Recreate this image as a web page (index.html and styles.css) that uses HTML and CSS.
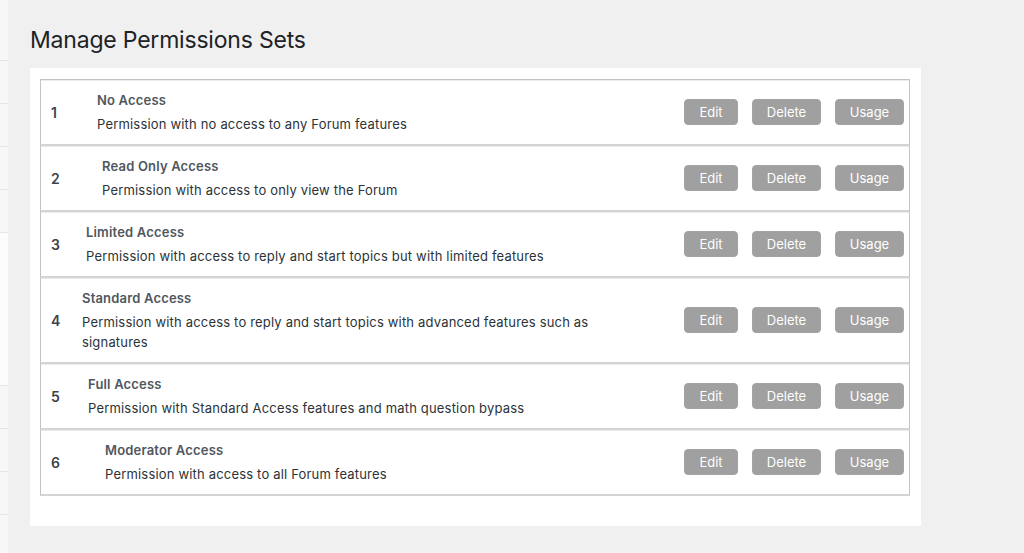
FILE: index.html
```html
<!DOCTYPE html>
<html>
<head>
<meta charset="utf-8">
<link rel="stylesheet" href="styles.css">
</head>
<body>
<div class="layout">
  <aside class="strip">
    <div class="seg s0"></div>
    <div class="seg"></div>
    <div class="seg"></div>
    <div class="seg"></div>
    <div class="seg"></div>
    <div class="seg white"></div>
    <div class="seg"></div>
    <div class="seg"></div>
    <div class="seg"></div>
    <div class="seg"></div>
  </aside>
  <main class="main">
    <h1 class="page-title">Manage Permissions Sets</h1>
    <section class="panel">
      <div class="list">
        <div class="row">
          <div class="num w1">1</div>
          <div class="info">
            <div class="name">No Access</div>
            <div class="desc">Permission with no access to any Forum features</div>
          </div>
          <div class="actions"><span class="btn b-edit">Edit</span><span class="btn b-del">Delete</span><span class="btn b-use">Usage</span></div>
        </div>
        <div class="row">
          <div class="num w2">2</div>
          <div class="info">
            <div class="name">Read Only Access</div>
            <div class="desc">Permission with access to only view the Forum</div>
          </div>
          <div class="actions"><span class="btn b-edit">Edit</span><span class="btn b-del">Delete</span><span class="btn b-use">Usage</span></div>
        </div>
        <div class="row">
          <div class="num w3">3</div>
          <div class="info">
            <div class="name">Limited Access</div>
            <div class="desc">Permission with access to reply and start topics but with limited features</div>
          </div>
          <div class="actions"><span class="btn b-edit">Edit</span><span class="btn b-del">Delete</span><span class="btn b-use">Usage</span></div>
        </div>
        <div class="row">
          <div class="num w4">4</div>
          <div class="info">
            <div class="name">Standard Access</div>
            <div class="desc">Permission with access to reply and start topics with advanced features such as signatures</div>
          </div>
          <div class="actions"><span class="btn b-edit">Edit</span><span class="btn b-del">Delete</span><span class="btn b-use">Usage</span></div>
        </div>
        <div class="row">
          <div class="num w5">5</div>
          <div class="info">
            <div class="name">Full Access</div>
            <div class="desc">Permission with Standard Access features and math question bypass</div>
          </div>
          <div class="actions"><span class="btn b-edit">Edit</span><span class="btn b-del">Delete</span><span class="btn b-use">Usage</span></div>
        </div>
        <div class="row">
          <div class="num w6">6</div>
          <div class="info">
            <div class="name">Moderator Access</div>
            <div class="desc">Permission with access to all Forum features</div>
          </div>
          <div class="actions"><span class="btn b-edit">Edit</span><span class="btn b-del">Delete</span><span class="btn b-use">Usage</span></div>
        </div>
      </div>
    </section>
  </main>
</div>
</body>
</html>
```
FILE: styles.css
```css
html, body {
  margin: 0;
  padding: 0;
}
body {
  background: #f0f0f1;
  font-family: Inter, "Liberation Sans", Arial, sans-serif;
  color: #3c434a;
  font-size: 13px;
}
.layout {
  display: flex;
  min-height: 553px;
}
.strip {
  width: 8px;
  flex: none;
  display: flex;
  flex-direction: column;
}
.seg {
  height: 42px;
  background: #f6f7f7;
  border-bottom: 1px solid #e6e6e6;
}
.seg.s0 {
  height: 60px;
}
.seg.white {
  height: 152px;
  background: #fcfcfc;
}
.main {
  margin-left: 22px;
  width: 891px;
}
.page-title {
  margin: 26px 0 13px;
  font-size: 23px;
  line-height: 29px;
  font-weight: 400;
  letter-spacing: -0.2px;
  color: #1d2327;
}
.panel {
  background: #fff;
  padding: 11px 11px 30px 10px;
}
.list {
  border-top: 1px solid #c3c4c7;
}
.row {
  display: flex;
  align-items: center;
  border-left: 1px solid #c3c4c7;
  border-right: 1px solid #c3c4c7;
  border-bottom: 2px solid #d4d4d6;
  box-shadow: inset 0 1px 0 #ececec;
  padding: 10px 0 10px;
  min-height: 44px;
}
.num {
  flex: none;
  box-sizing: border-box;
  padding-left: 10px;
  font-weight: 600;
  font-size: 14px;
  color: #3c434a;
}
.w1 { width: 56px; }
.w2 { width: 61px; }
.w3 { width: 45px; }
.w4 { width: 41px; }
.w5 { width: 47px; }
.w6 { width: 64px; }
.info {
  flex: 1;
  padding-right: 40px;
  letter-spacing: 0.18px;
}
.name {
  font-weight: 600;
  line-height: 20px;
  margin-bottom: 4px;
  color: #50575e;
}
.desc {
  max-width: 540px;
  line-height: 20px;
  color: #2c3338;
}
.actions {
  flex: none;
  display: flex;
  gap: 14px;
  padding-right: 5px;
}
.btn {
  box-sizing: border-box;
  height: 26px;
  line-height: 24px;
  border: 1px solid #a3a3a3;
  border-radius: 4px;
  background: #a0a0a0;
  color: #fff;
  text-align: center;
  font-size: 13px;
}
.b-edit { width: 54px; }
.b-del { width: 69px; }
.b-use { width: 69px; }
```
